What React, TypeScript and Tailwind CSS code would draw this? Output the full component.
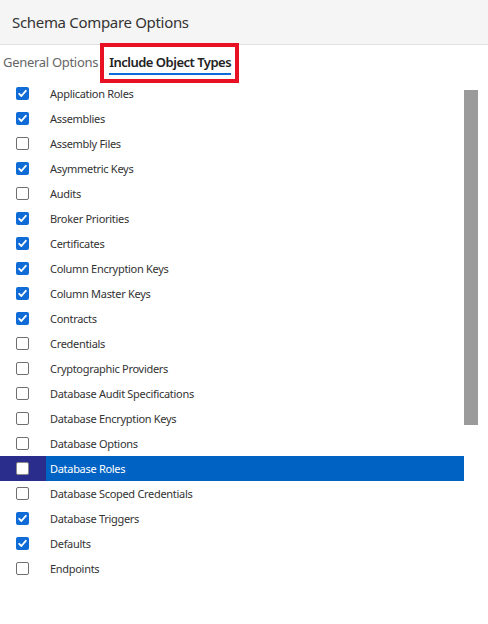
import React from "react";

const items: [string, boolean][] = [
  ["Application Roles", true],
  ["Assemblies", true],
  ["Assembly Files", false],
  ["Asymmetric Keys", true],
  ["Audits", false],
  ["Broker Priorities", true],
  ["Certificates", true],
  ["Column Encryption Keys", true],
  ["Column Master Keys", true],
  ["Contracts", true],
  ["Credentials", false],
  ["Cryptographic Providers", false],
  ["Database Audit Specifications", false],
  ["Database Encryption Keys", false],
  ["Database Options", false],
  ["Database Roles", false],
  ["Database Scoped Credentials", false],
  ["Database Triggers", true],
  ["Defaults", true],
  ["Endpoints", false],
];

function Box({ checked, selected }: { checked: boolean; selected?: boolean }) {
  if (checked) {
    return (
      <div className="w-[13px] h-[13px] rounded-[2px] bg-[#0f6cd6] flex items-center justify-center">
        <svg width="9" height="9" viewBox="0 0 9 9">
          <path d="M1.2 4.8 L3.4 7 L7.8 1.8" stroke="white" strokeWidth="1.8" fill="none" strokeLinecap="round" strokeLinejoin="round" />
        </svg>
      </div>
    );
  }
  return (
    <div
      className={
        "w-[13px] h-[13px] rounded-[2px] border " +
        (selected ? "bg-white border-[#8a8a8a]" : "bg-white border-[#6f6f6f]")
      }
    />
  );
}

export default function App() {
  return (
    <div
      className="w-[488px] h-[624px] bg-white relative overflow-hidden"
      style={{ fontFamily: '"Noto Sans", "Open Sans", sans-serif' }}
    >
      <div className="h-[45px] bg-[#f5f5f5] border-b border-[#e0e0e0] flex items-center pl-[12px]">
        <span className="text-[15px] tracking-[-0.32px] text-[#333] leading-none whitespace-nowrap">Schema Compare Options</span>
      </div>
      <div className="h-[36px] flex items-start whitespace-nowrap">
        <span className="ml-[3px] mt-[11px] text-[13px] tracking-[-0.3px] text-[#666] leading-none">General Options</span>
        <div className="ml-[2px] -mt-[2px] w-[139px] h-[40px] border-[4px] border-[#e81123] flex flex-col items-start pl-[5px] pt-[9px] shrink-0">
          <span className="text-[13px] font-semibold tracking-[-0.5px] text-[#222] leading-none">Include Object Types</span>
          <div className="mt-[4px] h-[2px] w-[122px] bg-[#0f6cd6]" />
        </div>
      </div>
      <div className="flex">
        <div className="w-[464px]">
          {items.map(([name, checked], i) => {
            const selected = name === "Database Roles";
            return (
              <div key={i} className={"h-[25px] flex items-center " + (selected ? "bg-[#0063c4]" : "")}>
                <div className={"w-[46px] h-full flex items-center pl-[16px] " + (selected ? "bg-[#2b2d8c]" : "")}>
                  <Box checked={checked} selected={selected} />
                </div>
                <span className={"ml-[4px] text-[11px] tracking-[-0.3px] leading-none whitespace-nowrap " + (selected ? "text-white" : "text-[#333]")}>
                  {name}
                </span>
              </div>
            );
          })}
        </div>
        <div className="w-[14px] pt-[9px]">
          <div className="h-[335px] bg-[#9b9b9b]" />
        </div>
      </div>
    </div>
  );
}
